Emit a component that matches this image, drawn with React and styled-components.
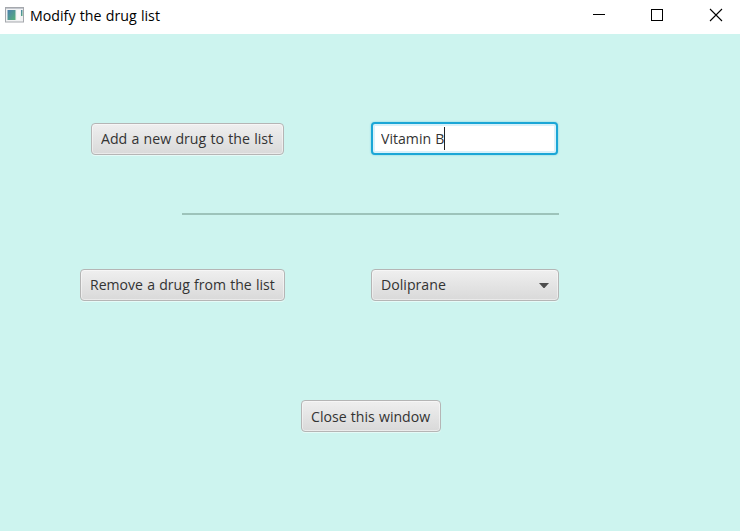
import React from "react";
import styled, { createGlobalStyle } from "styled-components";

const GlobalStyle = createGlobalStyle`
  *, *::before, *::after { box-sizing: border-box; }
  html, body { margin: 0; padding: 0; overflow: hidden; }
`;

const Window = styled.div`
  display: flex;
  flex-direction: column;
  width: 740px;
  height: 531px;
  background: #cdf4ef;
  font-family: "Open Sans", "Noto Sans", sans-serif;
  font-size: 15px;
  color: #333;
`;

const TitleBar = styled.header`
  display: flex;
  align-items: center;
  flex: none;
  height: 34px;
  padding-left: 5px;
  background: #fff;
  color: #000;
`;

const Title = styled.h1`
  flex: 1;
  margin: 0 0 5px 6px;
  font-size: 15px;
  line-height: 20px;
  font-weight: 400;
  white-space: nowrap;
`;

const Label = styled.span`
  display: inline-block;
  transform: scaleX(${(p) => p.$scale});
  transform-origin: left center;
  word-spacing: 0.6px;
  white-space: nowrap;
`;

const AppIcon = styled.svg`
  display: block;
  margin-bottom: 4px;
`;

const WindowButton = styled.button`
  display: block;
  width: 58px;
  height: 34px;
  margin: 0;
  padding: 0;
  border: 0;
  background: none;

  &:last-child { width: 53px; }

  svg { display: block; }
`;

const Content = styled.main`
  display: flex;
  flex-direction: column;
  flex: 1;
  padding-top: 89px;
`;

const Row = styled.div`
  display: flex;
  height: 32px;
  padding-left: ${(p) => p.$indent}px;
  gap: ${(p) => p.$gap || 0}px;
`;

const Button = styled.button`
  display: flex;
  align-items: center;
  flex: none;
  width: ${(p) => p.$width}px;
  height: 32px;
  margin: 0;
  padding: 0 0 2px 9px;
  border: 1px solid #b5b5b5;
  border-radius: 4px;
  background: linear-gradient(#efefef, #d9d9d9);
  box-shadow: inset 0 0 0 1px rgba(255, 255, 255, 0.45), 0 1px 0 rgba(255, 255, 255, 0.5);
  color: #333;
  font: inherit;
  line-height: 20px;
`;

const ComboBox = styled(Button)`
  justify-content: space-between;
  padding-right: 9px;

  svg { margin-top: 2px; }
`;

const Field = styled.div`
  display: flex;
  align-items: center;
  position: relative;
  width: 187px;
  height: 33px;
  margin-top: -1px;
  padding: 0 0 1px 8px;
  border: 2px solid #1ba6d6;
  border-radius: 4px;
  background: #fff;
  box-shadow: inset 0 0 0 2px #d9f1fa, 0 0 2px rgba(3, 158, 211, 0.45);
  line-height: 20px;
`;

const Caret = styled.span`
  position: absolute;
  left: 71px;
  top: 3px;
  width: 1px;
  height: 23px;
  background: #222;
`;

const Separator = styled.hr`
  width: 377px;
  height: 2px;
  margin: 58px 0 54px 182px;
  border: 0;
  background: #9dc3ba;
`;

const CloseRow = styled(Row)`
  margin-top: 99px;

  ${Button} { padding-bottom: 0; }
`;

export default function App() {
  return (
    <Window>
      <GlobalStyle />
      <TitleBar>
        <AppIcon width="19" height="16" viewBox="0 0 19 16">
          <defs>
            <linearGradient id="pane" x1="0" y1="0" x2="1" y2="1">
              <stop offset="0" stopColor="#4b7fae" />
              <stop offset="1" stopColor="#55b078" />
            </linearGradient>
          </defs>
          <rect x="0.5" y="0.5" width="18" height="14.5" fill="#f1f2f3" stroke="#a5a8ad" />
          <path d="M1 1.5h17" stroke="#c3c7ce" />
          <rect x="2.5" y="3" width="8" height="10" fill="url(#pane)" />
          <rect x="12" y="3" width="3" height="10" fill="#f8f8f8" />
          <rect x="16" y="3" width="1.5" height="6" fill="url(#pane)" />
        </AppIcon>
        <Title>
          <Label $scale={0.947}>Modify the drug list</Label>
        </Title>
        <WindowButton aria-label="Minimize">
          <svg width="58" height="34" shapeRendering="crispEdges">
            <rect x="22" y="14" width="12" height="1" fill="#000" />
          </svg>
        </WindowButton>
        <WindowButton aria-label="Maximize">
          <svg width="58" height="34" shapeRendering="crispEdges">
            <rect x="22.5" y="9.5" width="11" height="11" fill="none" stroke="#000" />
          </svg>
        </WindowButton>
        <WindowButton aria-label="Close">
          <svg width="53" height="34">
            <path d="M23 9l12 12M35 9l-12 12" stroke="#000" strokeWidth="1.1" />
          </svg>
        </WindowButton>
      </TitleBar>
      <Content>
        <Row $indent={91} $gap={87}>
          <Button $width={193}>
            <Label $scale={0.943}>Add a new drug to the list</Label>
          </Button>
          <Field>
            <Label $scale={0.94}>Vitamin B</Label>
            <Caret />
          </Field>
        </Row>
        <Separator />
        <Row $indent={80} $gap={86}>
          <Button $width={205}>
            <Label $scale={0.937}>Remove a drug from the list</Label>
          </Button>
          <ComboBox $width={188}>
            <Label $scale={0.943}>Doliprane</Label>
            <svg width="10" height="5" viewBox="0 0 10 5">
              <path d="M0 0h10L5.5 5h-1z" fill="#4d4d4d" />
            </svg>
          </ComboBox>
        </Row>
        <CloseRow $indent={301}>
          <Button $width={140}>
            <Label $scale={0.94}>Close this window</Label>
          </Button>
        </CloseRow>
      </Content>
    </Window>
  );
}
